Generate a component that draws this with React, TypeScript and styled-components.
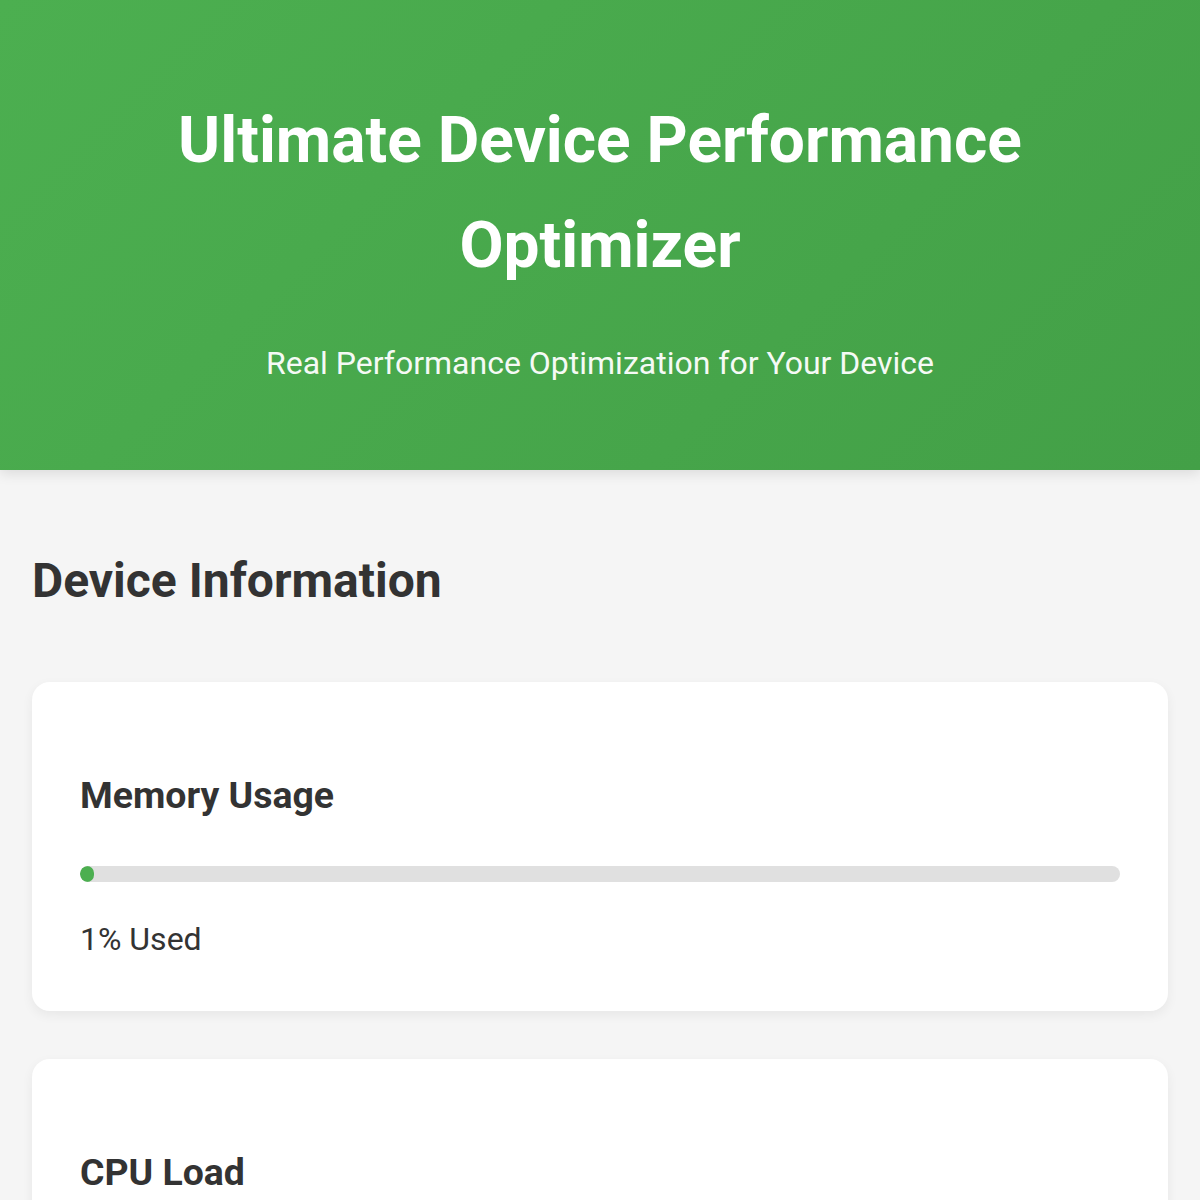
import React from "react";
import styled, {createGlobalStyle} from "styled-components";

const GlobalStyle = createGlobalStyle`
    html, body {
        margin: 0;
        padding: 0;
        background: #f5f5f5;
        font-family: Roboto, "Liberation Sans", Arial, sans-serif;
        color: #333333;
    }

    * {
        box-sizing: border-box;
    }
`;

const Hero = styled.header`
    background: linear-gradient(135deg, #4caf50 0%, #43a047 100%);
    color: #ffffff;
    text-align: center;
    padding: 88px 32px 81px;
    box-shadow: 0 4px 12px rgba(0, 0, 0, .1);
`;

const HeroTitle = styled.h1`
    margin: 0 auto;
    max-width: 900px;
    font-size: 64px;
    font-weight: 700;
    line-height: 105px;
`;

const HeroSubtitle = styled.p`
    margin: 40px 0 0;
    font-size: 32px;
    font-weight: 400;
    line-height: 1.6;
    opacity: .95;
`;

const Main = styled.main`
    padding: 82px 32px 48px;
`;

const SectionTitle = styled.h2`
    margin: 0 0 72px;
    font-size: 48px;
    font-weight: 700;
    line-height: 1.2;
`;

const CardList = styled.div`
    display: flex;
    flex-direction: column;
    gap: 48px;
`;

const Card = styled.section`
    background: #ffffff;
    border-radius: 18px;
    padding: 48px;
    box-shadow: 0 4px 12px rgba(0, 0, 0, .06);
`;

const CardTitle = styled.h3`
    margin: 43px 0 48px;
    font-size: 37.4px;
    font-weight: 700;
    line-height: 1.2;
`;

const Track = styled.div`
    height: 16px;
    border-radius: 8px;
    background: #e0e0e0;
    overflow: hidden;
`;

const Fill = styled.div`
    height: 100%;
    min-width: 14px;
    border-radius: 8px;
    background: #4caf50;
`;

const Stat = styled.p`
    margin: 33px 0 0;
    font-size: 32px;
    line-height: 1.5;
`;

const metrics = [
    {key: "memory", title: "Memory Usage", value: 1, label: "Used"},
    {key: "cpu", title: "CPU Load", value: 12, label: "Load"},
];

export default function App() {
    return (
        <>
            <GlobalStyle />
            <Hero>
                <HeroTitle>Ultimate Device Performance Optimizer</HeroTitle>
                <HeroSubtitle>Real Performance Optimization for Your Device</HeroSubtitle>
            </Hero>
            <Main>
                <SectionTitle>Device Information</SectionTitle>
                <CardList>
                    {
                        metrics.map((m) => (
                            <Card key={m.key}>
                                <CardTitle>{m.title}</CardTitle>
                                <Track>
                                    <Fill style={{width: `${m.value}%`}} />
                                </Track>
                                <Stat>{m.value}% {m.label}</Stat>
                            </Card>
                        ))
                    }
                </CardList>
            </Main>
        </>
    );
}
